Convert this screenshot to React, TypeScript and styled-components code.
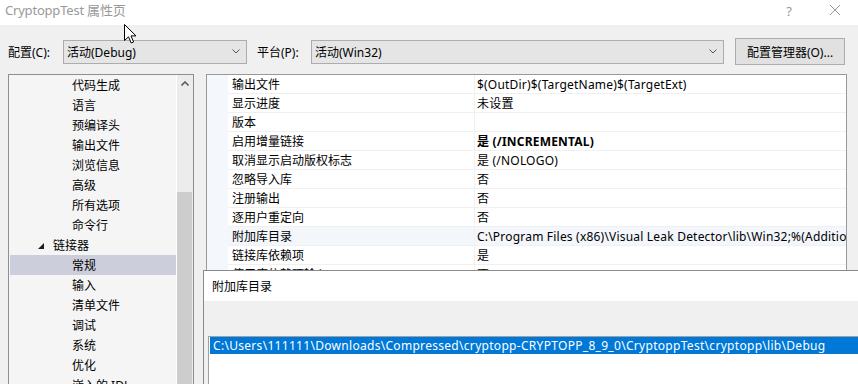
import React from 'react';
import styled, { createGlobalStyle } from 'styled-components';

const GlobalStyle = createGlobalStyle`
  html, body {
    margin: 0;
    padding: 0;
  }
  body {
    font-family: "Noto Sans", "Noto Sans CJK SC", sans-serif;
    font-size: 12px;
    color: #000;
    background: #f0f0f0;
  }
`;

const Window = styled.div`
  position: relative;
  width: 858px;
  height: 384px;
  overflow: hidden;
  background: #f0f0f0;
  display: flex;
  flex-direction: column;
`;

const TitleBar = styled.div`
  height: 25px;
  flex: none;
  background: #fff;
  display: flex;
  align-items: center;
  padding-left: 5px;
  color: #999;
  font-size: 13px;
`;

const TitleText = styled.span`
  flex: 1;
  margin-top: -6px;
  letter-spacing: -0.2px;
`;

const TitleButton = styled.span`
  width: 46px;
  height: 25px;
  display: flex;
  align-items: flex-start;
  justify-content: center;
  padding-top: 2px;
  box-sizing: border-box;
  color: #999;
  font-size: 13px;
`;

const Toolbar = styled.div`
  flex: none;
  height: 27px;
  display: flex;
  align-items: center;
  padding: 13px 13px 0 8px;
  margin-bottom: 9px;
`;

const FieldLabel = styled.span<{ $w: number; $ml?: number }>`
  width: ${p => p.$w}px;
  margin-left: ${p => p.$ml ?? 0}px;
  flex: none;
`;

const Combo = styled.div<{ $w: number }>`
  width: ${p => p.$w}px;
  height: 24px;
  box-sizing: border-box;
  border: 1px solid #adadad;
  background: #e5e5e5;
  display: flex;
  align-items: center;
  padding: 0 6px 0 3px;
  flex: none;
`;

const ComboText = styled.span`
  flex: 1;
`;

const Button = styled.div`
  margin-left: 11px;
  width: 110px;
  height: 27px;
  box-sizing: border-box;
  border: 1px solid #adadad;
  background: #e1e1e1;
  display: flex;
  align-items: center;
  justify-content: center;
  flex: none;
`;

const Main = styled.div`
  display: flex;
  align-items: flex-start;
  gap: 12px;
  padding-left: 8px;
  height: 330px;
  flex: none;
`;

const TreePanel = styled.div`
  width: 186px;
  height: 330px;
  box-sizing: border-box;
  border: 1px solid #8f8f8f;
  background: #f5f5f5;
  display: flex;
  flex: none;
`;

const TreeList = styled.div`
  flex: 1;
  padding-left: 1px;
`;

const TreeRow = styled.div<{ $indent: number; $selected?: boolean }>`
  height: 20px;
  display: flex;
  align-items: center;
  padding-left: ${p => p.$indent}px;
  background: ${p => (p.$selected ? '#cccedb' : 'transparent')};
  white-space: nowrap;
`;

const Expander = styled.svg`
  width: 6px;
  height: 6px;
  margin-right: 9px;
  margin-top: 2px;
`;

const ScrollBar = styled.div`
  width: 17px;
  border-left: 1px solid #fff;
  box-sizing: border-box;
  background: #ececec;
  display: flex;
  flex-direction: column;
`;

const ScrollArrow = styled.div`
  height: 17px;
  display: flex;
  align-items: center;
  justify-content: center;
`;

const ScrollThumb = styled.div`
  margin-top: 100px;
  width: 15px;
  flex: 1;
  background: #cdcdcd;
`;

const GridPanel = styled.div`
  width: 641px;
  height: 197px;
  overflow: hidden;
  box-sizing: border-box;
  border: 1px solid #999;
  border-bottom: none;
  display: flex;
  flex: none;
  background: #fff;
`;

const Gutter = styled.div`
  width: 21px;
  flex: none;
  background: #f4f7fc;
`;

const Rows = styled.div`
  flex: 1;
`;

const PropRow = styled.div<{ $hot?: boolean }>`
  display: grid;
  grid-template-columns: 246px 1fr;
  height: 19px;
  box-sizing: border-box;
  border-bottom: 1px solid #f0f0f0;
  background: ${p => (p.$hot ? '#f3f6fb' : '#fff')};
`;

const NameCell = styled.div`
  padding: 2px 0 0 4px;
  line-height: 16px;
  white-space: nowrap;
  overflow: hidden;
`;

const ValueCell = styled.div<{ $bold?: boolean }>`
  border-left: 1px solid #f0f0f0;
  padding: 2px 0 0 2px;
  line-height: 16px;
  white-space: nowrap;
  overflow: hidden;
  letter-spacing: 0.2px;
  font-weight: ${p => (p.$bold ? 700 : 400)};
`;

const Dialog = styled.div`
  position: absolute;
  left: 203px;
  top: 270px;
  right: -10px;
  bottom: -10px;
  border: 1px solid #8a8a8a;
  background: #f0f0f0;
  display: flex;
  flex-direction: column;
`;

const DialogTitle = styled.div`
  height: 30px;
  background: #fff;
  display: flex;
  align-items: center;
  padding-left: 8px;
`;

const ListBox = styled.div`
  margin: 35px 0 0 4px;
  flex: 1;
  border: 1px solid #a0a0a0;
  background: #fff;
  padding: 0 0 0 1px;
`;

const ListItem = styled.div<{ $selected?: boolean }>`
  height: 17px;
  line-height: 17px;
  padding-left: 3px;
  white-space: nowrap;
  letter-spacing: 0.3px;
  background: ${p => (p.$selected ? '#0078d7' : 'transparent')};
  color: ${p => (p.$selected ? '#fff' : '#000')};
`;

const Cursor = styled.svg`
  position: absolute;
  left: 124px;
  top: 24px;
  width: 13px;
  height: 20px;
`;

const treeItems: { label: string; indent: number; expander?: boolean; selected?: boolean }[] = [
  { label: '代码生成', indent: 62 },
  { label: '语言', indent: 62 },
  { label: '预编译头', indent: 62 },
  { label: '输出文件', indent: 62 },
  { label: '浏览信息', indent: 62 },
  { label: '高级', indent: 62 },
  { label: '所有选项', indent: 62 },
  { label: '命令行', indent: 62 },
  { label: '链接器', indent: 28, expander: true },
  { label: '常规', indent: 62, selected: true },
  { label: '输入', indent: 62 },
  { label: '清单文件', indent: 62 },
  { label: '调试', indent: 62 },
  { label: '系统', indent: 62 },
  { label: '优化', indent: 62 },
  { label: '嵌入的 IDL', indent: 62 },
];

const props: { name: string; value: string; bold?: boolean; hot?: boolean }[] = [
  { name: '输出文件', value: '$(OutDir)$(TargetName)$(TargetExt)' },
  { name: '显示进度', value: '未设置' },
  { name: '版本', value: '' },
  { name: '启用增量链接', value: '是 (/INCREMENTAL)', bold: true },
  { name: '取消显示启动版权标志', value: '是 (/NOLOGO)' },
  { name: '忽略导入库', value: '否' },
  { name: '注册输出', value: '否' },
  { name: '逐用户重定向', value: '否' },
  { name: '附加库目录', value: 'C:\\Program Files (x86)\\Visual Leak Detector\\lib\\Win32;%(AdditionalLibraryDirectories)', hot: true },
  { name: '链接库依赖项', value: '是' },
  { name: '使用库依赖项输入', value: '否' },
];

function Chevron() {
  return (
    <svg width="8" height="5" viewBox="0 0 8 5">
      <polyline points="0.5,0.5 4,4 7.5,0.5" fill="none" stroke="#555" strokeWidth="1" />
    </svg>
  );
}

export default function App() {
  return (
    <Window>
      <GlobalStyle />
      <TitleBar>
        <TitleText>CryptoppTest 属性页</TitleText>
        <TitleButton>?</TitleButton>
        <TitleButton>
          <svg width="12" height="12" viewBox="0 0 12 12" style={{ marginTop: 2 }}>
            <path d="M1 1 L11 11 M11 1 L1 11" stroke="#999" strokeWidth="1" />
          </svg>
        </TitleButton>
      </TitleBar>

      <Toolbar>
        <FieldLabel $w={55}>配置(C):</FieldLabel>
        <Combo $w={184}>
          <ComboText>活动(Debug)</ComboText>
          <Chevron />
        </Combo>
        <FieldLabel $w={54} $ml={10}>平台(P):</FieldLabel>
        <Combo $w={413}>
          <ComboText>活动(Win32)</ComboText>
          <Chevron />
        </Combo>
        <Button>配置管理器(O)...</Button>
      </Toolbar>

      <Main>
        <TreePanel>
          <TreeList>
            {treeItems.map(item => (
              <TreeRow key={item.label} $indent={item.indent} $selected={item.selected}>
                {item.expander && (
                  <Expander viewBox="0 0 6 6">
                    <polygon points="6,0 6,6 0,6" fill="#1e1e1e" />
                  </Expander>
                )}
                {item.label}
              </TreeRow>
            ))}
          </TreeList>
          <ScrollBar>
            <ScrollArrow>
              <svg width="8" height="5" viewBox="0 0 8 5">
                <polyline points="0.5,4.5 4,1 7.5,4.5" fill="none" stroke="#606060" strokeWidth="1.6" />
              </svg>
            </ScrollArrow>
            <ScrollThumb />
          </ScrollBar>
        </TreePanel>

        <GridPanel>
          <Gutter />
          <Rows>
            {props.map(p => (
              <PropRow key={p.name} $hot={p.hot}>
                <NameCell>{p.name}</NameCell>
                <ValueCell $bold={p.bold}>{p.value}</ValueCell>
              </PropRow>
            ))}
          </Rows>
        </GridPanel>
      </Main>

      <Dialog>
        <DialogTitle>附加库目录</DialogTitle>
        <ListBox>
          <ListItem $selected>
            C:\Users\111111\Downloads\Compressed\cryptopp-CRYPTOPP_8_9_0\CryptoppTest\cryptopp\lib\Debug
          </ListItem>
        </ListBox>
      </Dialog>

      <Cursor viewBox="0 0 13 20">
        <path d="M0.5 0.5 L0.5 16.5 L4.5 12.8 L7.2 19 L9.6 18 L7 11.9 L12 11.9 Z" fill="#fff" stroke="#000" strokeWidth="1" strokeLinejoin="miter" />
      </Cursor>
    </Window>
  );
}
